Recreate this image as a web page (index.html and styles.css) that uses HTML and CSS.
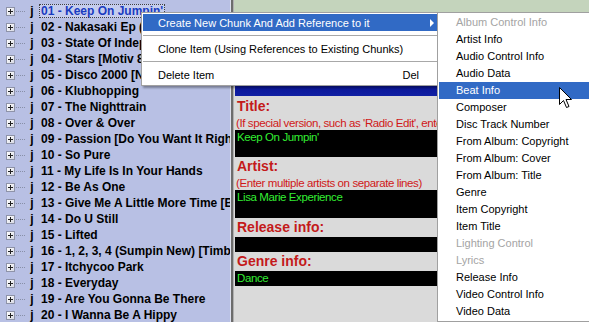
FILE: index.html
```html
<!DOCTYPE html>
<html>
<head>
<meta charset="utf-8">
<link rel="stylesheet" href="styles.css">
</head>
<body>
<div class="app">
  <div class="tree">
    <div class="row"><span class="exp"></span><span class="dots"></span><span class="ico">j</span><span class="lbl sel">01 - Keep On Jumpin'</span></div>
    <div class="row"><span class="exp"></span><span class="dots"></span><span class="ico">j</span><span class="lbl">02 - Nakasaki Ep (I Need A Lover Tonight)</span></div>
    <div class="row"><span class="exp"></span><span class="dots"></span><span class="ico">j</span><span class="lbl">03 - State Of Independence</span></div>
    <div class="row"><span class="exp"></span><span class="dots"></span><span class="ico">j</span><span class="lbl">04 - Stars [Motiv 8 Mix]</span></div>
    <div class="row"><span class="exp"></span><span class="dots"></span><span class="ico">j</span><span class="lbl">05 - Disco 2000 [Nick Hook Mix]</span></div>
    <div class="row"><span class="exp"></span><span class="dots"></span><span class="ico">j</span><span class="lbl">06 - Klubhopping</span></div>
    <div class="row"><span class="exp"></span><span class="dots"></span><span class="ico">j</span><span class="lbl">07 - The Nighttrain</span></div>
    <div class="row"><span class="exp"></span><span class="dots"></span><span class="ico">j</span><span class="lbl">08 - Over &amp; Over</span></div>
    <div class="row"><span class="exp"></span><span class="dots"></span><span class="ico">j</span><span class="lbl">09 - Passion [Do You Want It Right Now]</span></div>
    <div class="row"><span class="exp"></span><span class="dots"></span><span class="ico">j</span><span class="lbl">10 - So Pure</span></div>
    <div class="row"><span class="exp"></span><span class="dots"></span><span class="ico">j</span><span class="lbl">11 - My Life Is In Your Hands</span></div>
    <div class="row"><span class="exp"></span><span class="dots"></span><span class="ico">j</span><span class="lbl">12 - Be As One</span></div>
    <div class="row"><span class="exp"></span><span class="dots"></span><span class="ico">j</span><span class="lbl">13 - Give Me A Little More Time [Bass Mix]</span></div>
    <div class="row"><span class="exp"></span><span class="dots"></span><span class="ico">j</span><span class="lbl">14 - Do U Still</span></div>
    <div class="row"><span class="exp"></span><span class="dots"></span><span class="ico">j</span><span class="lbl">15 - Lifted</span></div>
    <div class="row"><span class="exp"></span><span class="dots"></span><span class="ico">j</span><span class="lbl">16 - 1, 2, 3, 4 (Sumpin New) [Timber Mix]</span></div>
    <div class="row"><span class="exp"></span><span class="dots"></span><span class="ico">j</span><span class="lbl">17 - Itchycoo Park</span></div>
    <div class="row"><span class="exp"></span><span class="dots"></span><span class="ico">j</span><span class="lbl">18 - Everyday</span></div>
    <div class="row"><span class="exp"></span><span class="dots"></span><span class="ico">j</span><span class="lbl">19 - Are You Gonna Be There</span></div>
    <div class="row"><span class="exp"></span><span class="dots"></span><span class="ico">j</span><span class="lbl">20 - I Wanna Be A Hippy</span></div>
  </div>
  <div class="split"></div>
  <div class="pane">
    <div class="top"></div>
    <div class="bar"></div>
    <div class="form">
      <div class="lab">Title:</div>
      <div class="hint">(If special version, such as 'Radio Edit', enter it here)</div>
      <div class="box tall1">Keep On Jumpin'</div>
      <div class="lab">Artist:</div>
      <div class="hint">(Enter multiple artists on separate lines)</div>
      <div class="box tall2">Lisa Marie Experience</div>
      <div class="lab">Release info:</div>
      <div class="box"></div>
      <div class="lab">Genre info:</div>
      <div class="box">Dance</div>
    </div>
  </div>
</div>

<div class="menu">
  <div class="mi hi"><span>Create New Chunk And Add Reference to it</span><span class="arrow"></span></div>
  <div class="sep"></div>
  <div class="mi"><span>Clone Item (Using References to Existing Chunks)</span></div>
  <div class="sep"></div>
  <div class="mi"><span>Delete Item</span><span class="key">Del</span></div>
</div>

<div class="sub">
  <div class="si dis">Album Control Info</div>
  <div class="si">Artist Info</div>
  <div class="si">Audio Control Info</div>
  <div class="si">Audio Data</div>
  <div class="si hi">Beat Info</div>
  <div class="si">Composer</div>
  <div class="si">Disc Track Number</div>
  <div class="si">From Album: Copyright</div>
  <div class="si">From Album: Cover</div>
  <div class="si">From Album: Title</div>
  <div class="si">Genre</div>
  <div class="si">Item Copyright</div>
  <div class="si">Item Title</div>
  <div class="si dis">Lighting Control</div>
  <div class="si dis">Lyrics</div>
  <div class="si">Release Info</div>
  <div class="si">Video Control Info</div>
  <div class="si">Video Data</div>
</div>

<svg class="cursor" width="14" height="22" viewBox="0 0 14 22">
  <path d="M0.5 0.5 V17.5 L4.5 13.5 L7.5 20.5 L10 19.5 L7 12.5 H12.5 Z" fill="#fff" stroke="#000" stroke-width="1" stroke-linejoin="miter"/>
</svg>
</body>
</html>
```

FILE: styles.css
```css
html, body {
  margin: 0;
  padding: 0;
  width: 589px;
  height: 322px;
  overflow: hidden;
  background: #dadada;
}

.app {
  display: flex;
  width: 589px;
  height: 322px;
}

.tree {
  width: 230px;
  flex: none;
  background: #b8c0e4;
  overflow: hidden;
  padding-top: 3px;
  box-sizing: border-box;
}

.row {
  display: flex;
  align-items: center;
  height: 16px;
  padding-left: 6px;
  white-space: nowrap;
}

.exp {
  position: relative;
  flex: none;
  width: 7px;
  height: 7px;
  border: 1px solid #8e93a8;
  background: linear-gradient(135deg, #ffffff, #d8dae4);
}
.exp::before {
  content: "";
  position: absolute;
  left: 1px;
  top: 3px;
  width: 5px;
  height: 1px;
  background: #202020;
}
.exp::after {
  content: "";
  position: absolute;
  left: 3px;
  top: 1px;
  width: 1px;
  height: 5px;
  background: #202020;
}

.dots {
  flex: none;
  width: 9px;
  margin-left: 1px;
  border-top: 1px dotted #8890a8;
}

.ico {
  flex: none;
  width: 14px;
  text-align: center;
  font: bold 12px "Liberation Sans", Arial, sans-serif;
  line-height: 16px;
  color: #000;
}

.lbl {
  font: bold 12px "Liberation Sans", Arial, sans-serif;
  line-height: 14px;
  padding: 0 2px;
  color: #000;
}

.lbl.sel {
  color: #1a3cc0;
  background: #c6cdee;
  outline: 1px dotted #404040;
  outline-offset: -1px;
}

.split {
  flex: none;
  width: 4px;
  box-sizing: border-box;
  border-left: 1px solid #dde0ee;
  border-right: 1px solid #b0b0b0;
  background: #6c6c6c;
}

.pane {
  flex: 1;
  display: flex;
  flex-direction: column;
  background: #dadada;
  overflow: hidden;
}

.top {
  height: 76px;
  flex: none;
  background: #c4d4bc;
}

.bar {
  height: 20px;
  flex: none;
  background: linear-gradient(180deg, #050a88, #1020a4);
  margin-left: 1px;
}

.form {
  display: flex;
  flex-direction: column;
  padding: 1px 0 0 1px;
}

.lab {
  font: bold 14px "Liberation Sans", Arial, sans-serif;
  line-height: 19px;
  height: 19px;
  color: #c41a1a;
  padding-left: 2px;
  white-space: nowrap;
}

.hint {
  font: 11.5px "Liberation Sans", Arial, sans-serif;
  letter-spacing: -0.4px;
  line-height: 14px;
  height: 14px;
  color: #d01818;
  padding-left: 1px;
  white-space: nowrap;
  overflow: hidden;
}

.box {
  background: #000;
  color: #33ee33;
  font: 11.5px "Liberation Sans", Arial, sans-serif;
  letter-spacing: -0.4px;
  line-height: 14px;
  height: 15px;
  padding-left: 2px;
  white-space: nowrap;
  overflow: hidden;
}
.box.tall1 { height: 27px; }
.box.tall2 { height: 28px; }

.menu {
  position: absolute;
  left: 141px;
  top: 12px;
  width: 294px;
  background: #fff;
  border: 1px solid #a0a0a0;
  padding: 1px 1px 2px 1px;
  box-shadow: 2px 2px 2px rgba(0, 0, 0, 0.35);
  font: 11px "Liberation Sans", Arial, sans-serif;
  color: #000;
}

.mi {
  display: flex;
  align-items: center;
  justify-content: space-between;
  height: 17px;
  padding: 0 18px 0 15px;
  white-space: nowrap;
}

.mi.hi {
  background: #316ac5;
  color: #fff;
  padding-right: 3px;
}

.arrow {
  width: 0;
  height: 0;
  border-top: 4px solid transparent;
  border-bottom: 4px solid transparent;
  border-left: 4px solid #fff;
}

.sep {
  height: 9px;
  display: flex;
  align-items: center;
}
.sep::before {
  content: "";
  flex: 1;
  height: 1px;
  background: #a8a8a8;
}

.sub {
  position: absolute;
  left: 437px;
  top: 12px;
  width: 160px;
  background: #fff;
  border: 1px solid #a0a0a0;
  padding: 1px;
  font: 11px "Liberation Sans", Arial, sans-serif;
  color: #000;
}

.si {
  height: 17px;
  line-height: 17px;
  padding-left: 17px;
  white-space: nowrap;
}
.si.dis { color: #a4a4a4; }
.si.hi { background: #316ac5; color: #fff; }

.cursor {
  position: absolute;
  left: 559px;
  top: 87px;
}
```
